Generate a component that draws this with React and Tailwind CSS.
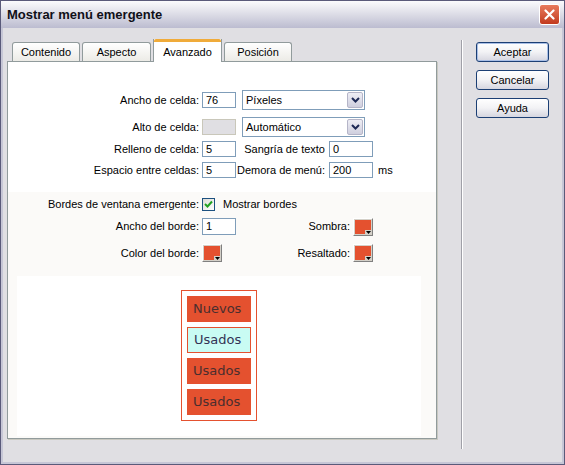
import React from 'react';

const label = 'text-right text-[11px] text-black leading-none';

function TextBox({ value = '', w = 'w-[34px]', h = 'h-[16px]', disabled = false }) {
  return (
    <div
      className={`${w} ${h} border border-[#7f9db9] flex items-center pl-[3px] text-[11px] leading-none text-black ${
        disabled ? 'bg-[#e0dfe3] border-[#c9c7ba]' : 'bg-white'
      }`}
    >
      {value}
    </div>
  );
}

function Select({ value }) {
  return (
    <div className="w-[123px] h-[20px] border border-[#7f9db9] bg-white flex items-center justify-between pl-[3px] pr-px">
      <span className="text-[11px] leading-none text-black">{value}</span>
      <div className="w-[16px] h-[16px] bg-gradient-to-b from-[#eeeef5] to-[#cfcfde] border border-[#b5b5c8] rounded-[2px] flex items-center justify-center">
        <svg width="9" height="6" viewBox="0 0 9 6">
          <path d="M1 1 L4.5 4.5 L8 1" fill="none" stroke="#1e2a56" strokeWidth="2" />
        </svg>
      </div>
    </div>
  );
}

function Swatch() {
  return (
    <div className="relative w-[20px] h-[18px] border border-t-white border-l-white border-r-[#808080] border-b-[#808080] bg-[#d4d0c8] p-px">
      <div className="w-full h-full bg-[#e4512f]" />
      <div className="absolute right-0 bottom-0 w-[7px] h-[5px] bg-[#d4d0c8] flex items-center justify-center">
        <svg width="5" height="3" viewBox="0 0 5 3">
          <path d="M0 0 H5 L2.5 3 Z" fill="#000" />
        </svg>
      </div>
    </div>
  );
}

function Tab({ children, selected }) {
  if (selected) {
    return (
      <div className="relative z-10 w-[69px] h-[23px] -mb-px bg-white border-x border-[#919b9c] flex flex-col">
        <div className="h-[3px] bg-[#f0ab3a] rounded-t-[2px]" />
        <div className="flex-1 flex items-center justify-center text-[11px] text-black">{children}</div>
      </div>
    );
  }
  return (
    <div className="h-[19px] border border-b-0 border-[#919b9c] rounded-t-[3px] bg-gradient-to-b from-white to-[#ecebe6] flex items-center justify-center text-[11px] text-black">
      {children}
    </div>
  );
}

function Button({ children, primary }) {
  return (
    <div
      className={`w-[73px] h-[20px] rounded-[3px] border border-[#1c3f74] bg-gradient-to-b from-white via-[#f2f2f5] to-[#d6d6e0] flex items-center justify-center text-[11px] text-black ${
        primary ? 'shadow-[inset_0_0_0_1px_#a9bfe6]' : ''
      }`}
    >
      {children}
    </div>
  );
}

function MenuItem({ children, over }) {
  return (
    <div
      className={`w-[64px] h-[26px] flex items-center pl-[6px] text-[13px] font-['DejaVu_Sans',sans-serif] ${
        over ? 'bg-[#c9fcf3] border border-[#e4512f] text-[#333355]' : 'bg-[#e4512f] text-[#4a2e2e]'
      }`}
    >
      {children}
    </div>
  );
}

export default function App() {
  return (
    <div className="w-[565px] h-[465px] border border-[#5a5a7a] bg-[#e0dfe3] flex flex-col font-['Liberation_Sans',Arial,sans-serif] overflow-hidden">
      {/* title bar */}
      <div className="h-[27px] shrink-0 bg-gradient-to-b from-[#fbfbfd] via-[#dcdce6] to-[#bcbcd0] flex items-center justify-between pl-[6px] pr-[4px]">
        <span className="text-[13px] font-bold text-[#101018]">Mostrar menú emergente</span>
        <div className="w-[21px] h-[21px] rounded-[3px] border border-white bg-gradient-to-b from-[#e87a5c] to-[#c2391c] flex items-center justify-center">
          <svg width="11" height="11" viewBox="0 0 11 11">
            <path d="M1.5 1.5 L9.5 9.5 M9.5 1.5 L1.5 9.5" stroke="#fff" strokeWidth="2.2" strokeLinecap="round" />
          </svg>
        </div>
      </div>

      {/* body */}
      <div className="flex-1 flex border-x-2 border-b-2 border-[#c6c6d6] pl-[4px]">
        {/* left column */}
        <div className="w-[430px] pt-[11px] flex flex-col">
          <div className="h-[22px] flex items-end gap-[2px] pl-[5px]">
            <div className="w-[68px]"><Tab>Contenido</Tab></div>
            <div className="w-[69px]"><Tab>Aspecto</Tab></div>
            <Tab selected>Avanzado</Tab>
            <div className="w-[68px]"><Tab>Posición</Tab></div>
          </div>

          <div className="h-[378px] border border-[#919b9c] bg-white flex flex-col shadow-[1px_1px_0_#c8c8c0]">
            {/* top section */}
            <div className="h-[130px] pt-[28px] flex flex-col">
              <div className="h-[20px] flex items-center">
                <div className={`w-[191px] ${label}`}>Ancho de celda:</div>
                <div className="ml-[3px]"><TextBox value="76" /></div>
                <div className="ml-[6px]"><Select value="Píxeles" /></div>
              </div>
              <div className="h-[20px] mt-[7px] flex items-center">
                <div className={`w-[191px] ${label}`}>Alto de celda:</div>
                <div className="ml-[3px]"><TextBox disabled /></div>
                <div className="ml-[6px]"><Select value="Automático" /></div>
              </div>
              <div className="h-[16px] mt-[4px] flex items-center">
                <div className={`w-[191px] ${label}`}>Relleno de celda:</div>
                <div className="ml-[3px]"><TextBox value="5" /></div>
                <div className={`w-[89px] ${label}`}>Sangría de texto</div>
                <div className="ml-[4px]"><TextBox value="0" w="w-[44px]" /></div>
              </div>
              <div className="h-[16px] mt-[5px] flex items-center">
                <div className={`w-[191px] ${label}`}>Espacio entre celdas:</div>
                <div className="ml-[3px]"><TextBox value="5" /></div>
                <div className={`w-[89px] ${label}`}>Demora de menú:</div>
                <div className="ml-[4px]"><TextBox value="200" w="w-[44px]" /></div>
                <span className="ml-[5px] text-[11px] leading-none text-black">ms</span>
              </div>
            </div>

            {/* border section */}
            <div className="flex-1 bg-[#fbfaf8] pt-[5px] flex flex-col">
              <div className="h-[14px] flex items-center">
                <div className={`w-[191px] ${label}`}>Bordes de ventana emergente:</div>
                <div className="ml-[3px] w-[13px] h-[13px] border border-[#1c5180] bg-gradient-to-br from-[#dcdcd7] to-white flex items-center justify-center">
                  <svg width="9" height="9" viewBox="0 0 9 9">
                    <path d="M1 4 L3.5 6.5 L8 1.5" fill="none" stroke="#21a121" strokeWidth="2" />
                  </svg>
                </div>
                <span className="ml-[8px] text-[11px] leading-none text-black">Mostrar bordes</span>
              </div>
              <div className="h-[19px] mt-[6px] flex items-center">
                <div className={`w-[191px] ${label}`}>Ancho del borde:</div>
                <div className="ml-[3px]"><TextBox value="1" h="h-[17px]" /></div>
                <div className={`w-[114px] ${label}`}>Sombra:</div>
                <div className="ml-[3px]"><Swatch /></div>
              </div>
              <div className="h-[18px] mt-[8px] flex items-center">
                <div className={`w-[191px] ${label}`}>Color del borde:</div>
                <div className="ml-[3px]"><Swatch /></div>
                <div className={`w-[128px] ${label}`}>Resaltado:</div>
                <div className="ml-[3px]"><Swatch /></div>
              </div>

              <div className="ml-[9px] mt-[14px] w-[404px] h-[160px] bg-white pt-[14px] flex justify-center items-start">
                <div className="border border-[#e4512f] p-[5px] flex flex-col gap-[5px]">
                  <MenuItem>Nuevos</MenuItem>
                  <MenuItem over>Usados</MenuItem>
                  <MenuItem>Usados</MenuItem>
                  <MenuItem>Usados</MenuItem>
                </div>
              </div>
            </div>
          </div>
        </div>

        {/* separator */}
        <div className="ml-[24px] mt-[12px] w-[2px] h-[409px] border-l border-[#a0a0a8] bg-white" />

        {/* buttons */}
        <div className="ml-[13px] pt-[14px] flex flex-col gap-[8px]">
          <Button primary>Aceptar</Button>
          <Button>Cancelar</Button>
          <Button>Ayuda</Button>
        </div>
      </div>
    </div>
  );
}
